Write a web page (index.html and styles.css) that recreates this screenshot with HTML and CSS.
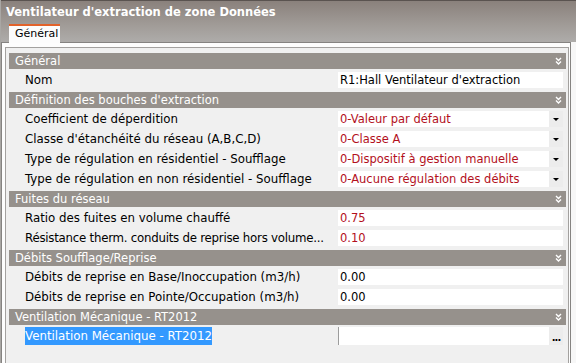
FILE: index.html
```html
<!DOCTYPE html>
<html lang="fr">
<head>
  <meta charset="UTF-8">
  <title>Ventilateur d'extraction de zone Données</title>
  <link rel="stylesheet" href="styles.css">
</head>
<body>
  <div class="window">
    <div class="titlebar">
      <div class="title">Ventilateur d'extraction de zone Données</div>
      <div class="tabs">
        <div class="tab active">Général</div>
      </div>
    </div>

    <div class="page">
      <div class="grid">

        <div class="section"><span>Général</span><svg class="chevron" viewBox="0 0 7 8"><polyline points="1,1 3.5,3.5 6,1"/><polyline points="1,4.5 3.5,7 6,4.5"/></svg></div>
        <div class="row">
          <div class="label">Nom</div>
          <div class="value">R1:Hall Ventilateur d'extraction</div>
        </div>

        <div class="section"><span>Définition des bouches d'extraction</span><svg class="chevron" viewBox="0 0 7 8"><polyline points="1,1 3.5,3.5 6,1"/><polyline points="1,4.5 3.5,7 6,4.5"/></svg></div>
        <div class="row">
          <div class="label">Coefficient de déperdition</div>
          <div class="value red"><span class="text">0-Valeur par défaut</span><span class="btn"><i class="arrow"></i></span></div>
        </div>
        <div class="row">
          <div class="label">Classe d'étanchéité du réseau (A,B,C,D)</div>
          <div class="value red"><span class="text">0-Classe A</span><span class="btn"><i class="arrow"></i></span></div>
        </div>
        <div class="row">
          <div class="label">Type de régulation en résidentiel - Soufflage</div>
          <div class="value red"><span class="text">0-Dispositif à gestion manuelle</span><span class="btn"><i class="arrow"></i></span></div>
        </div>
        <div class="row">
          <div class="label">Type de régulation en non résidentiel - Soufflage</div>
          <div class="value red"><span class="text">0-Aucune régulation des débits</span><span class="btn"><i class="arrow"></i></span></div>
        </div>

        <div class="section"><span>Fuites du réseau</span><svg class="chevron" viewBox="0 0 7 8"><polyline points="1,1 3.5,3.5 6,1"/><polyline points="1,4.5 3.5,7 6,4.5"/></svg></div>
        <div class="row">
          <div class="label">Ratio des fuites en volume chauffé</div>
          <div class="value red">0.75</div>
        </div>
        <div class="row">
          <div class="label tight">Résistance therm. conduits de reprise hors volume...</div>
          <div class="value red">0.10</div>
        </div>

        <div class="section"><span>Débits Soufflage/Reprise</span><svg class="chevron" viewBox="0 0 7 8"><polyline points="1,1 3.5,3.5 6,1"/><polyline points="1,4.5 3.5,7 6,4.5"/></svg></div>
        <div class="row">
          <div class="label">Débits de reprise en Base/Inoccupation (m3/h)</div>
          <div class="value">0.00</div>
        </div>
        <div class="row">
          <div class="label">Débits de reprise en Pointe/Occupation (m3/h)</div>
          <div class="value">0.00</div>
        </div>

        <div class="section"><span>Ventilation Mécanique - RT2012</span><svg class="chevron" viewBox="0 0 7 8"><polyline points="1,1 3.5,3.5 6,1"/><polyline points="1,4.5 3.5,7 6,4.5"/></svg></div>
        <div class="row">
          <div class="label"><span class="selected">Ventilation Mécanique - RT2012</span></div>
          <div class="value editing"><span class="text"></span><span class="btn dots">...</span></div>
        </div>

      </div>
    </div>
  </div>
</body>
</html>
```

FILE: styles.css
```css
* {
  box-sizing: border-box;
}

body {
  margin: 0;
  background-color: #f0f0f0;
  font-family: "DejaVu Sans", sans-serif;
  font-size: 11.5px;
  color: #000;
}

.window {
  width: 576px;
  height: 363px;
  display: flex;
  flex-direction: column;
  border-left: 1px solid #a9a7a4;
  background-color: #f7f7f7;
  overflow: hidden;
}

.titlebar {
  height: 42px;
  display: flex;
  flex-direction: column;
  border-top: 1px solid #5a5350;
  background: linear-gradient(#8a817c, #a19c98 60%, #aeacaa);
}

.title {
  padding: 3px 0 0 5px;
  font-weight: bold;
  font-size: 11.5px;
  line-height: 16px;
  color: #fff;
}

.tabs {
  margin-top: auto;
  display: flex;
  padding-left: 8px;
}

.tab {
  width: 51px;
  height: 19px;
  margin-bottom: -1px;
  padding-left: 6px;
  font-size: 11px;
  line-height: 16px;
  background-color: #fcfcfc;
  border-top: 2px solid #e2622a;
  position: relative;
  z-index: 1;
}

.page {
  flex: 1;
  width: 570px;
  padding: 4px 1px 0 3px;
  border: 1px solid #858381;
  border-bottom: none;
  background-color: #fdfdfd;
  display: flex;
  flex-direction: column;
}

.grid {
  flex: 1;
  padding: 4px 2px 0 3px;
  border: 1px solid #a3a19f;
  border-bottom: none;
  background-color: #f0f0f0;
}

.section {
  height: 16px;
  margin: 1px 0 2px;
  padding: 0 4px 0 6px;
  display: flex;
  align-items: center;
  justify-content: space-between;
  background-color: #96918c;
  color: #fff;
  line-height: 16px;
}

.chevron {
  width: 7px;
  height: 8px;
  fill: none;
  stroke: #fff;
  stroke-width: 1.4;
}

.row {
  height: 20px;
  display: flex;
}

.label {
  width: 329px;
  flex: none;
  padding: 1px 2px 0 16px;
  font-size: 11.8px;
  line-height: 16px;
  white-space: nowrap;
  overflow: hidden;
}

.label.tight {
  letter-spacing: -0.25px;
}

.selected {
  display: inline-block;
  height: 18px;
  margin-top: -1px;
  line-height: 18px;
  background-color: #3399ff;
  color: #fff;
}

.value {
  flex: 1;
  height: 16px;
  margin: 1px 3px 0 0;
  padding-left: 2px;
  display: flex;
  line-height: 16px;
  background-color: #fff;
  white-space: nowrap;
}

.value .text {
  flex: 1;
}

.red {
  color: #b3101c;
}

.editing {
  border-left: 1px solid #9c9c9c;
  height: 18px;
  margin-top: 0;
}

.btn {
  width: 14px;
  height: 16px;
  display: flex;
  align-items: center;
  justify-content: center;
  background-color: #ececec;
}

.arrow {
  width: 0;
  height: 0;
  border-left: 3px solid transparent;
  border-right: 3px solid transparent;
  border-top: 3px solid #000;
}

.dots {
  height: 18px;
  align-items: flex-end;
  padding-bottom: 3px;
  font-weight: bold;
  font-size: 10px;
  line-height: 8px;
  letter-spacing: -1px;
  color: #000;
}
```
